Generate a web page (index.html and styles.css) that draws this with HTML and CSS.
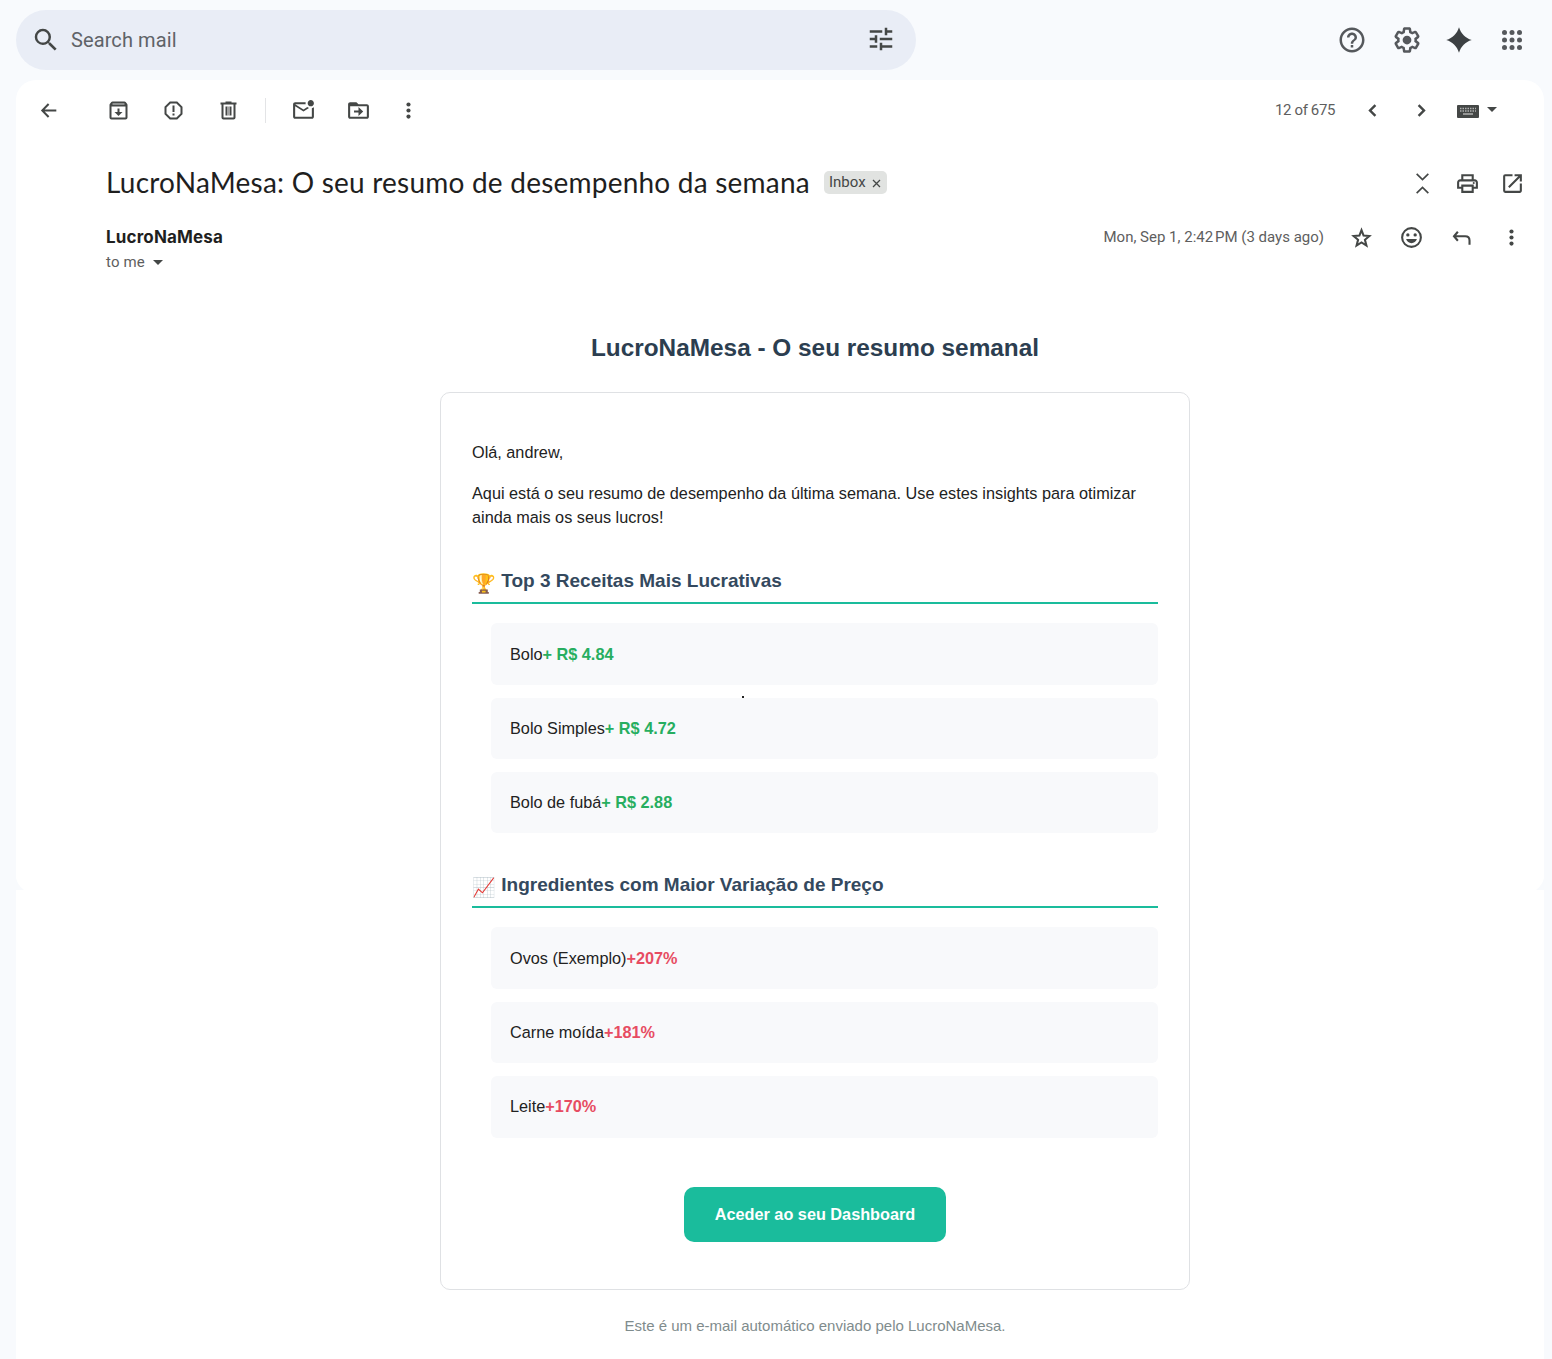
FILE: index.html
```
<!DOCTYPE html>
<html lang="pt">
<head>
<meta charset="utf-8">
<title>LucroNaMesa: O seu resumo de desempenho da semana</title>
<link rel="stylesheet" href="styles.css">
</head>
<body>
<header class="topbar">
  <div class="search">
    <svg class="icon icon-search" viewBox="0 0 24 24"><path d="M15.5 14h-.79l-.28-.27A6.47 6.47 0 0 0 16 9.5 6.5 6.5 0 1 0 9.5 16c1.61 0 3.09-.59 4.23-1.57l.27.28v.79l5 4.99L20.49 19l-4.99-5zm-6 0C7.01 14 5 11.99 5 9.500S7.010 5 9.500 5 14 7.010 14 9.500 11.990 14 9.500 14z"/></svg>
    <span class="search-text">Search mail</span>
    <svg class="icon icon-tune" viewBox="0 0 24 24"><path d="M3 17v2h6v-2H3zM3 5v2h10V5H3zm10 16v-2h8v-2h-8v-2h-2v6h2zM7 9v2H3v2h4v2h2V9H7zm14 4v-2H11v2h10zm-6-4h2V7h4V5h-4V3h-2v6z"/></svg>
  </div>
  <nav class="apps">
    <svg class="icon" viewBox="0 0 24 24"><path d="M11 18h2v-2h-2v2zm1-16C6.480 2 2 6.480 2 12s4.480 10 10 10 10-4.480 10-10S17.520 2 12 2zm0 18c-4.410 0-8-3.590-8-8s3.590-8 8-8 8 3.590 8 8-3.590 8-8 8zm0-14c-2.210 0-4 1.790-4 4h2c0-1.100.9-2 2-2s2 .9 2 2c0 2-3 1.750-3 5h2c0-2.250 3-2.500 3-5 0-2.210-1.790-4-4-4z"/></svg>
    <svg class="icon" viewBox="0 0 24 24"><path d="M13.850 22.250h-3.700c-.74 0-1.360-.54-1.450-1.270l-.27-1.890c-.27-.14-.53-.29-.79-.46l-1.800.72c-.7.26-1.470-.03-1.810-.65L2.200 15.530c-.35-.66-.2-1.440.36-1.880l1.530-1.190c-.01-.15-.02-.3-.02-.46 0-.15.010-.31.020-.46l-1.520-1.190c-.59-.45-.74-1.260-.37-1.880l1.850-3.190c.34-.62 1.110-.9 1.790-.63l1.810.73c.26-.17.52-.32.78-.46l.27-1.910c.09-.7.710-1.250 1.440-1.250h3.700c.74 0 1.360.54 1.450 1.270l.27 1.890c.27.14.53.29.79.46l1.800-.72c.71-.26 1.480.03 1.820.65l1.840 3.180c.36.66.2 1.440-.36 1.880l-1.520 1.190c.01.15.02.3.02.46s-.01.31-.02.46l1.520 1.190c.56.45.72 1.230.37 1.860l-1.860 3.220c-.34.62-1.110.9-1.800.63l-1.800-.72c-.26.17-.52.32-.78.46l-.27 1.910c-.1.680-.72 1.220-1.460 1.220zm-3.230-2h2.760l.37-2.550.53-.22c.44-.18.88-.44 1.340-.78l.45-.34 2.380.96 1.380-2.400-2.030-1.580.07-.56c.03-.26.06-.51.06-.78s-.03-.53-.06-.78l-.07-.56 2.030-1.580-1.390-2.400-2.390.96-.45-.35c-.42-.32-.87-.58-1.330-.77l-.52-.22-.37-2.550h-2.760l-.37 2.550-.53.21c-.44.19-.88.44-1.340.79l-.45.33-2.380-.95-1.390 2.390 2.030 1.580-.07.56a7 7 0 0 0-.06.79c0 .26.020.53.060.78l.07.56-2.030 1.580 1.380 2.400 2.390-.96.45.35c.43.33.86.58 1.330.77l.53.22.38 2.550z"/><circle cx="12" cy="12" r="3.500"/></svg>
    <svg class="icon icon-spark" viewBox="0 0 24 24"><path d="M12 1.800C13.600 7 17 10.400 22.200 12 17 13.600 13.600 17 12 22.200 10.400 17 7 13.600 1.800 12 7 10.400 10.400 7 12 1.800z"/></svg>
    <svg class="icon" viewBox="0 0 24 24"><g><circle cx="6" cy="6" r="2"/><circle cx="12" cy="6" r="2"/><circle cx="18" cy="6" r="2"/><circle cx="6" cy="12" r="2"/><circle cx="12" cy="12" r="2"/><circle cx="18" cy="12" r="2"/><circle cx="6" cy="18" r="2"/><circle cx="12" cy="18" r="2"/><circle cx="18" cy="18" r="2"/></g></svg>
  </nav>
</header>

<main class="panel">
  <div class="toolbar">
    <svg class="icon" viewBox="0 0 24 24"><path d="M19.500 11H8.300l4.500-4.600L11.400 5 4.700 12l6.700 7 1.400-1.400L8.300 13h11.200z"/></svg>
    <div class="group group-file">
      <svg class="icon" viewBox="-.5 -.5 25 25"><path d="M20.540 5.230l-1.390-1.680C18.880 3.210 18.470 3 18 3H6c-.47 0-.88.210-1.160.55L3.460 5.230C3.170 5.570 3 6.020 3 6.500V19c0 1.100.9 2 2 2h14c1.100 0 2-.9 2-2V6.500c0-.48-.17-.93-.46-1.270zM19 19H5V8h14v11z"/><path class="soft" d="M6 4.700h12v1.600H6z"/><path d="M11 10h2v3.500h3L12 17.500l-4-4h3z"/></svg>
      <svg class="icon" viewBox="-.5 -.5 25 25"><path d="M8.270 3L3 8.270v7.460L8.270 21h7.460L21 15.730V8.270L15.730 3H8.270zM19 14.900L14.900 19H9.100L5 14.900V9.100L9.100 5h5.800L19 9.100v5.800z"/><path d="M11 7h2v6.500h-2zM11 15h2v2h-2z"/></svg>
      <svg class="icon" viewBox="-.5 -.5 25 25"><path d="M15 4V3H9v1H4v2h1v13c0 1.100.9 2 2 2h10c1.100 0 2-.9 2-2V6h1V4h-5zm2 15H7V6h10v13zM9 8h2v9H9V8zm4 0h2v9h-2V8z"/><path class="soft" d="M11 8h2v9h-2z"/></svg>
    </div>
    <div class="divider"></div>
    <div class="group">
      <svg class="icon" viewBox="0 0 24 24"><path d="M22 8.980V18c0 1.100-.9 2-2 2H4c-1.100 0-2-.9-2-2V6c0-1.100.9-2 2-2h10.100c-.1.320-.1.660-.1 1s0 .68.100 1H4l8 5 3.670-2.290c.47.430 1.020.76 1.630.98L12 13 4 8v10h16V9.900c.74-.15 1.420-.48 2-.92zM16 5c0 1.660 1.340 3 3 3s3-1.340 3-3-1.340-3-3-3-3 1.340-3 3z"/></svg>
      <svg class="icon" viewBox="0 0 24 24"><path d="M20 6h-8l-2-2H4c-1.100 0-1.990.9-1.990 2L2 18c0 1.100.9 2 2 2h16c1.100 0 2-.9 2-2V8c0-1.100-.9-2-2-2zm0 12H4V8h16v10zM12 8.700V12H7.700v2H12v3.300l4.500-4.300z"/><path d="M3 5h7l2 2.500H3z"/></svg>
      <svg class="icon icon-more" viewBox="0 0 24 24"><circle cx="12" cy="6.200" r="2"/><circle cx="12" cy="12" r="2"/><circle cx="12" cy="17.800" r="2"/></svg>
    </div>
    <div class="pager">
      <span class="count">12 of 675</span>
      <svg class="icon prev" viewBox="0 0 24 24"><path d="M15.610 7.610L14 6l-6 6 6 6 1.610-1.610L11.230 12z"/></svg>
      <svg class="icon next" viewBox="0 0 24 24"><path d="M10 6L8.390 7.610 12.770 12l-4.380 4.390L10 18l6-6z"/></svg>
      <svg class="keyboard" viewBox="0 0 22 13"><rect width="22" height="13" rx="1"/><path class="keys" d="M3 3.500h16M3 6h16" /><path class="space" d="M6 9h10"/></svg>
      <svg class="caret" viewBox="0 0 10 5"><path d="M0 0h10L5 5z"/></svg>
    </div>
  </div>

  <div class="subject-row">
    <h1 class="subject">LucroNaMesa: O seu resumo de desempenho da semana</h1>
    <span class="chip"><span class="chip-text">Inbox</span><svg class="chip-x" viewBox="0 0 9 9"><path d="M1 1l7 7M8 1L1 8"/></svg></span>
    <div class="subject-actions">
      <svg class="icon" viewBox="0 0 24 24"><path class="line thin" d="M6.400 2.800L12 8.300l5.600-5.500M6.400 21.200L12 15.700l5.600 5.500"/></svg>
      <svg class="icon" viewBox="0 0 24 24"><path d="M19 8h-1V3H6v5H5c-1.660 0-3 1.340-3 3v6h4v4h12v-4h4v-6c0-1.660-1.340-3-3-3zM8 5h8v3H8V5zm8 12v2H8v-4h8v2zm2-2v-2H6v2H4v-4c0-.55.450-1 1-1h14c.55 0 1 .45 1 1v4h-2z"/><circle cx="18" cy="11.500" r="1"/></svg>
      <svg class="icon" viewBox="0 0 24 24"><path d="M19 19H5V5h7V3H5a2 2 0 0 0-2 2v14a2 2 0 0 0 2 2h14c1.100 0 2-.9 2-2v-7h-2v7zM14 3v2h3.590l-9.830 9.830 1.410 1.410L19 6.410V10h2V3h-7z"/></svg>
    </div>
  </div>

  <div class="sender-row">
    <div>
      <div class="sender">LucroNaMesa</div>
      <div class="recipient">to me <svg class="caret" viewBox="0 0 10 5"><path d="M0 0h10L5 5z"/></svg></div>
    </div>
    <div class="meta">
      <span class="date">Mon, Sep 1, 2:42&#8239;PM (3 days ago)</span>
      <svg class="icon" viewBox="0 0 24 24"><path class="line" d="M12 5l2 5.200 5.500.4-4.200 3.600 1.400 5.500L12 16.700l-4.700 3 1.400-5.500-4.200-3.600 5.500-.4z"/></svg>
      <svg class="icon" viewBox="0 0 24 24"><path d="M12 2a10 10 0 1 0 0 20 10 10 0 0 0 0-20zm0 18a8 8 0 1 1 0-16 8 8 0 0 1 0 16z"/><circle cx="8.500" cy="9.500" r="1.600"/><circle cx="15.500" cy="9.500" r="1.600"/><path d="M6.800 13.500h10.400c-.8 2.400-2.800 4-5.200 4s-4.400-1.600-5.200-4z"/></svg>
      <svg class="icon" viewBox="0 0 24 24"><path class="line" d="M8.500 6.500L4.800 10.800l3.700 4.300M4.800 10.800h10.700c3 0 4.200 1.500 4.200 4V19"/></svg>
      <svg class="icon" viewBox="0 0 24 24"><circle cx="12" cy="6.200" r="2"/><circle cx="12" cy="12" r="2"/><circle cx="12" cy="17.800" r="2"/></svg>
    </div>
  </div>

  <article class="mail">
    <h2 class="mail-title">LucroNaMesa - O seu resumo semanal</h2>
    <div class="card">
      <p>Olá, andrew,</p>
      <p>Aqui está o seu resumo de desempenho da última semana. Use estes insights para otimizar ainda mais os seus lucros!</p>
      <h3><span class="emoji">🏆</span> Top 3 Receitas Mais Lucrativas</h3>
      <ul>
        <li>Bolo<b class="gain">+ R$ 4.84</b></li>
        <li>Bolo Simples<b class="gain">+ R$ 4.72</b><span class="speck"></span></li>
        <li>Bolo de fubá<b class="gain">+ R$ 2.88</b></li>
      </ul>
      <h3><span class="emoji">📈</span> Ingredientes com Maior Variação de Preço</h3>
      <ul>
        <li>Ovos (Exemplo)<b class="rise">+207%</b></li>
        <li>Carne moída<b class="rise">+181%</b></li>
        <li>Leite<b class="rise">+170%</b></li>
      </ul>
      <a class="button">Aceder ao seu Dashboard</a>
    </div>
    <p class="footer">Este é um e-mail automático enviado pelo LucroNaMesa.</p>
  </article>
  <svg class="notch notch-left" viewBox="0 0 8 12"><path d="M0 0C1 5 4 9 8 12H0z"/></svg>
  <svg class="notch notch-right" viewBox="0 0 8 12"><path d="M8 0C7 5 4 9 0 12h8z"/></svg>
</main>
</body>
</html>
```

FILE: styles.css
```
* { box-sizing: border-box; }
body { margin: 0; height: 1359px; overflow: hidden; background: #f8fafd; font-family: Roboto, sans-serif; color: #222; }
svg { display: block; flex: none; fill: #444746; }
.icon { width: 25px; height: 25px; }
.line { fill: none; stroke: #444746; stroke-width: 2; }
.thin { stroke-width: 1.6; }
.soft { fill: #a2a3a3; }

.topbar { height: 80px; padding: 0 25px 0 16px; display: flex; align-items: center; justify-content: space-between; }
.search { width: 900px; height: 60px; border-radius: 30px; background: #e9edf6; display: flex; align-items: center; padding: 0 20px 0 15px; }
.search-text { font-size: 20px; letter-spacing: .1px; color: #5f6368; margin-left: 10px; flex: 1; }
.search .icon, .apps .icon { width: 30px; height: 30px; }
.search .icon-tune { margin-top: -2px; }
.apps { display: flex; align-items: center; }
.apps svg { fill: #55585c; }
.apps svg + svg { margin-left: 25px; }
.apps .icon-spark { margin-left: 22px; fill: #3c4043; }
.apps .icon-spark + svg { margin-left: 23px; }

.panel { position: relative; height: 1279px; margin: 0 8px 0 16px; border-radius: 20px 20px 0 0; background: #fff; }
.toolbar { height: 61px; padding: 0 47px 0 20px; display: flex; align-items: center; }
.group { display: flex; gap: 30px; }
.group-file { margin-left: 45px; }
.icon-more { margin-left: -5px; }
.divider { width: 1px; height: 25px; margin: 0 25px 0 24px; background: #e3e4e6; }
.pager { margin-left: auto; display: flex; align-items: center; }
.count { margin-top: -2px; font-size: 15px; letter-spacing: -.38px; color: #5e5e5e; }
.prev { margin-left: 25px; }
.next { margin-left: 24px; }
.keyboard { width: 22px; height: 13px; margin: 2px 0 0 23px; }
.keys { stroke: #b0b1b1; stroke-width: 1.5; stroke-dasharray: 1.500 1; fill: none; }
.space { stroke: #b0b1b1; stroke-width: 1.500; }
.caret { width: 10px; height: 5px; }
.pager .caret { margin: -3px 0 0 8px; }

.subject-row { height: 82px; padding: 0 19px 0 90px; display: flex; align-items: center; }
.subject { margin: 0; width: 718px; font: 400 28px/36px Lato, sans-serif; letter-spacing: .22px; white-space: nowrap; color: #1f1f1f; }
.chip { width: 63px; height: 23px; margin-top: 1px; padding: 0 6px 0 5px; border-radius: 5px; background: #e1e3e1; display: flex; align-items: center; justify-content: space-between; }
.chip-text { margin-top: -2px; font-size: 15px; line-height: 22px; color: #444746; }
.chip-x { width: 9px; height: 9px; margin-top: 1px; stroke: #444746; stroke-width: 1.3; }
.subject-actions { margin-left: auto; display: flex; gap: 20px; margin-top: 3px; }

.sender-row { height: 55px; padding: 0 20px 0 90px; display: flex; justify-content: space-between; }
.sender { font: 700 17px/28px Inter, sans-serif; letter-spacing: .16px; color: #1f1f1f; }
.recipient { font-size: 15px; line-height: 22px; letter-spacing: .15px; color: #5e5e5e; display: flex; align-items: center; gap: 8px; }
.meta { display: flex; align-items: center; height: 29px; gap: 25px; }
.date { margin-top: -2px; font-size: 15px; color: #5e5e5e; }

.mail { width: 750px; margin: 48px auto 0 424px; font: 16.25px/24.3px "Liberation Sans", Arial, sans-serif; }
.mail-title { margin: 0; padding-top: 4px; font-size: 24.375px; line-height: 36px; text-align: center; color: #2c3e50; }
.card { margin-top: 26px; height: 898px; border: 1px solid #dfe1e4; border-radius: 10px; padding: 47px 31px 0; }
.card p { margin: 0 0 16.500px; }
.card h3 { height: 39px; margin: 36px 0 19px; font-size: 19px; line-height: 32px; border-bottom: 2px solid #1abc9c; color: #34495e; }
.emoji { line-height: 1; vertical-align: -3px; }
ul { list-style: none; margin: 0; padding: 0 0 0 18.500px; display: grid; gap: 12.500px; }
li { position: relative; height: 61.700px; padding: 18.500px 19.500px; border-radius: 6px; background: #f8f9fb; }
.gain { color: #27ae60; }
.rise { color: #e74c62; }
.speck { position: absolute; left: 251px; top: -2px; width: 2px; height: 2px; background: #222; }
.button { display: block; width: 262px; height: 55px; margin: 49.500px auto 0; border-radius: 10px; background: #1abc9c; color: #fff; font-weight: 700; line-height: 54px; text-align: center; }
.footer { margin: 24px 0 0; font-size: 15px; text-align: center; color: #7f8c8d; }
.notch { position: absolute; top: 798px; width: 8px; height: 12px; fill: #f8fafd; }
.notch-left { left: 0; }
.notch-right { right: 0; }
```
